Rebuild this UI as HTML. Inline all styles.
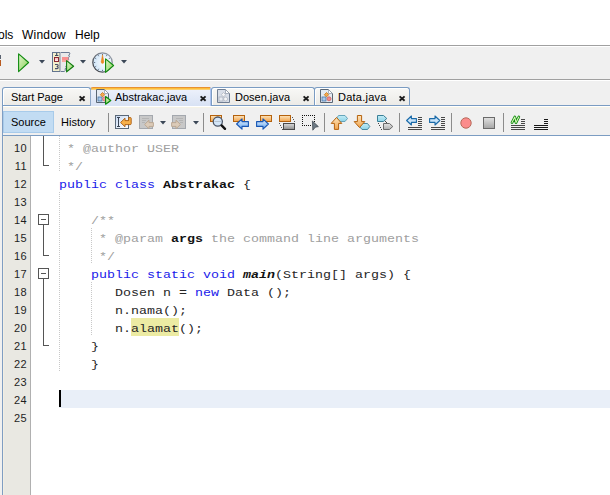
<!DOCTYPE html>
<html><head><meta charset="utf-8">
<style>
html,body{margin:0;padding:0;}
body{width:610px;height:495px;overflow:hidden;position:relative;background:#fff;font-family:"Liberation Sans",sans-serif;}
.abs{position:absolute;}
#menu{left:0;top:0;width:610px;height:45px;background:#fff;}
#menu span{position:absolute;top:28px;font-size:12px;line-height:14px;color:#000;white-space:nowrap;}
#tb{left:0;top:45px;width:610px;height:42px;background:#f0f0f0;}
#tabs{left:0;top:87px;width:610px;height:19px;background:#f0f0f0;}
.tab{position:absolute;top:0;height:18px;border:1px solid #7b9cc2;border-bottom:none;border-radius:3px 3px 0 0;box-sizing:border-box;background:linear-gradient(#f8f8f6,#ecebe7);box-shadow:inset 1px 1px 0 #fff;font-size:11px;line-height:14px;color:#000;white-space:nowrap;}
.tab .t{position:absolute;top:2px;}
.tab .x{position:absolute;top:8px;width:7px;height:6px;}
#etb{left:0;top:106px;width:610px;height:30px;background:#f0f0f0;}
#ed{left:0;top:136px;width:610px;height:359px;background:#fff;}
#gut{left:3px;top:0;width:27px;height:359px;background:#e9e8e2;box-shadow:inset 1px 0 0 #f2eee3;}
.ln{position:absolute;left:0;width:24px;text-align:right;font-size:11px;line-height:18px;color:#1e1e1e;height:18px;padding-top:1px;letter-spacing:0.4px;}
.cl{position:absolute;left:59px;height:18px;font-family:"Liberation Mono",monospace;font-size:13.333px;line-height:18px;white-space:pre;color:#262626;}
.c{color:#a0a0a0;} .k{color:#1a1aea;} .b{font-weight:bold;color:#121212;} .bi{font-weight:bold;font-style:italic;color:#121212;}
.cl{transform-origin:0 12.55px;transform:translateY(1.5px) scaleY(0.86);}
.dg{position:absolute;width:1px;background:repeating-linear-gradient(to bottom,#c8c8c8 0,#c8c8c8 1px,#fff 1px,#fff 2px);}
</style></head><body>
<div id="menu" class="abs"><span style="left:-2px">ols</span><span style="left:22px;letter-spacing:0.2px">Window</span><span style="left:75px">Help</span></div>
<div id="tb" class="abs">
  <div class="abs" style="left:0;top:0;width:610px;height:1px;background:#a0a0a0"></div>
  <div class="abs" style="left:0;top:1px;width:610px;height:1px;background:#fff"></div>
  <div class="abs" style="left:0;top:34px;width:610px;height:1px;background:#a0a0a0"></div>
  <div class="abs" style="left:0;top:35px;width:610px;height:1px;background:#fff"></div>
</div>
<div id="tabs" class="abs">
  <div class="abs" style="left:2px;top:18px;width:608px;height:1px;background:#7b9cc2"></div>
  <div class="tab" style="left:2px;width:89px;"><span class="t" style="left:8px">Start Page</span></div>
  <div class="tab" style="left:90px;width:121px;background:linear-gradient(#fdbf3a,#fdbf3a) 0 0/100% 1px no-repeat,linear-gradient(#fcd070,#fcd070) 0 1px/100% 1px no-repeat,linear-gradient(#eef2fb,#d8e2f4);border:none;border-top:1px solid #e89030;border-left:1px solid #8fa8c8;border-right:1px solid #adc3ef;top:0;height:19px;border-radius:3px 0 0 0;box-shadow:none"><span class="t" style="left:24px;top:2px">Abstrakac.java</span></div>
  <div class="tab" style="left:211px;width:104px;"><span class="t" style="left:23px">Dosen.java</span></div>
  <div class="tab" style="left:314px;width:96px;"><span class="t" style="left:23px;letter-spacing:0.25px">Data.java</span></div>
</div>
<div id="etb" class="abs">
  <div class="abs" style="left:3px;top:0;width:607px;height:1px;background:#fff"></div>
  <div class="abs" style="left:3px;top:1px;width:607px;height:1px;background:#f5f3e6"></div>
  <div class="abs" style="left:2px;top:0;width:1px;height:30px;background:#7f9dc2"></div>
  <div class="abs" style="left:3px;top:5px;width:51px;height:22px;box-sizing:border-box;background:#c2dcf3;border:1px solid #a8cbea"></div>
  <span class="abs" style="left:11px;top:9px;font-size:11px;line-height:14px">Source</span>
  <span class="abs" style="left:61px;top:9px;font-size:11px;line-height:14px">History</span>
  <div class="abs" style="left:2px;top:29px;width:608px;height:1px;background:#7b9cc2"></div>
</div>
<div id="ed" class="abs">
  <div class="abs" style="left:0;top:0;width:2px;height:359px;background:#f0f0f0"></div>
  <div class="abs" style="left:2px;top:0;width:1px;height:359px;background:#7f9dc2"></div>
  <div id="gut" class="abs">
    <div class="ln" style="top:2px">10</div>
    <div class="ln" style="top:20px">11</div>
    <div class="ln" style="top:38px">12</div>
    <div class="ln" style="top:56px">13</div>
    <div class="ln" style="top:74px">14</div>
    <div class="ln" style="top:92px">15</div>
    <div class="ln" style="top:110px">16</div>
    <div class="ln" style="top:128px">17</div>
    <div class="ln" style="top:146px">18</div>
    <div class="ln" style="top:164px">19</div>
    <div class="ln" style="top:182px">20</div>
    <div class="ln" style="top:200px">21</div>
    <div class="ln" style="top:218px">22</div>
    <div class="ln" style="top:236px">23</div>
    <div class="ln" style="top:254px">24</div>
    <div class="ln" style="top:272px">25</div>
  </div>
  <div class="abs" style="left:131px;top:182px;width:48px;height:18px;background:#ecebA3"></div>
  <div class="dg" style="left:59px;top:0;height:36px"></div>
  <div class="dg" style="left:59px;top:56px;height:180px"></div>
  <div class="dg" style="left:91px;top:92px;height:36px"></div>
  <div class="dg" style="left:91px;top:146px;height:54px"></div>
  <!--CODE-->
  <div class="cl" style="top:2px"><span class="c"> * @author USER</span></div>
  <div class="cl" style="top:20px"><span class="c"> */</span></div>
  <div class="cl" style="top:38px"><span class="k">public</span> <span class="k">class</span> <span class="b">Abstrakac</span> {</div>
  <div class="cl" style="top:74px"><span class="c">    /**</span></div>
  <div class="cl" style="top:92px"><span class="c">     * @param <span class="b">args</span> the command line arguments</span></div>
  <div class="cl" style="top:110px"><span class="c">     */</span></div>
  <div class="cl" style="top:128px">    <span class="k">public</span> <span class="k">static</span> <span class="k">void</span> <span class="bi">main</span>(String[] args) {</div>
  <div class="cl" style="top:146px">       Dosen n = <span class="k">new</span> Data ();</div>
  <div class="cl" style="top:164px">       n.nama();</div>
  <div class="cl" style="top:182px">       n.alamat();</div>
  <div class="cl" style="top:200px">    }</div>
  <div class="cl" style="top:218px">    }</div>
  <!--/CODE-->
  <div class="abs" style="left:30px;top:0;width:1px;height:359px;background:#b0b0b0"></div>
  <div class="abs" style="left:59px;top:254px;width:551px;height:18px;background:#e9eff8"></div>
  <div class="abs" style="left:59px;top:254px;width:2px;height:17px;background:#000"></div>
</div>
<svg class="abs" style="left:0;top:0" width="610" height="495" viewBox="0 0 610 495">
<defs>
<linearGradient id="gG" x1="0" y1="0" x2="1" y2="1"><stop offset="0" stop-color="#e4f6d0"/><stop offset="1" stop-color="#86d054"/></linearGradient>
<linearGradient id="gO" x1="0" y1="0" x2="0" y2="1"><stop offset="0" stop-color="#fde4bc"/><stop offset="1" stop-color="#f2a44c"/></linearGradient>
<linearGradient id="gB" x1="0" y1="0" x2="0" y2="1"><stop offset="0" stop-color="#eef6ff"/><stop offset="1" stop-color="#62a6f0"/></linearGradient>
<linearGradient id="gGr" x1="0" y1="0" x2="0" y2="1"><stop offset="0" stop-color="#dcdcdc"/><stop offset="1" stop-color="#8e8e8e"/></linearGradient>
<linearGradient id="gC" x1="0" y1="0" x2="0" y2="1"><stop offset="0" stop-color="#c4ecf6"/><stop offset="1" stop-color="#8cd4e8"/></linearGradient>
<linearGradient id="gBox" x1="0" y1="0" x2="1" y2="1"><stop offset="0" stop-color="#c8daf4"/><stop offset="1" stop-color="#ffffff"/></linearGradient>
<radialGradient id="gClk" cx="0.65" cy="0.5" r="0.75"><stop offset="0" stop-color="#ffffff"/><stop offset="1" stop-color="#c6e0f6"/></radialGradient>
<linearGradient id="gGr2" x1="0" y1="0" x2="0" y2="1"><stop offset="0" stop-color="#e2e2e2"/><stop offset="1" stop-color="#a4a4a4"/></linearGradient>
<linearGradient id="gGr3" x1="0" y1="0" x2="0" y2="1"><stop offset="0" stop-color="#e4e4e4"/><stop offset="1" stop-color="#b0b0b0"/></linearGradient>
<linearGradient id="gRing" x1="1" y1="0" x2="0" y2="1"><stop offset="0" stop-color="#a4acb8"/><stop offset="1" stop-color="#34363c"/></linearGradient>
</defs>
<!--MAINTB-->
<g id="maintb">
<rect x="0" y="55" width="1" height="4" fill="#5a6270"/><rect x="0" y="60" width="1" height="6" fill="#b85a20"/>
<path d="M18.6 53.8 L28.6 62.5 L18.6 71.6 Z" fill="url(#gG)" stroke="#0f8a0f" stroke-width="1.1" stroke-linejoin="round"/>
<path d="M39 60 H45 L42 63.5 Z" fill="#3c4858"/>
<!-- debug icon -->
<rect x="52.5" y="52.5" width="7.5" height="19" fill="#f3efcc" stroke="#62748e"/>
<rect x="60" y="53" width="1" height="18" fill="#b4bac4"/>
<path d="M61 52.5 H69.4 L70 54 L68.6 55 L69.6 56.6 L68 57.6 L68.8 59.4 L67.4 60.4 L68 62 L66.6 63.2 L67.2 65 L65.8 66 L66.4 67.8 L65 68.8 L65.4 70.4 L64.2 71.5 H61" fill="#e9e9ea" stroke="#6a7a94" stroke-width="1" stroke-linejoin="round"/>
<rect x="62" y="57" width="6.4" height="5" fill="#f89090"/>
<rect x="62" y="60" width="5.6" height="2" fill="#f8a8a0"/>
<path d="M55 55.5 H58.4 M56.7 53 V55.5" stroke="#3e4a5e" stroke-width="1.1" fill="none"/>
<rect x="54.5" y="57.5" width="4" height="4" fill="#f9c4c4" stroke="#8b2a32"/>
<rect x="55" y="59.6" width="3" height="1.4" fill="#fdeaea"/>
<path d="M55 64.5 H57.2 Q58.2 64.5 58.2 65.5 Q58.2 66.5 56.6 66.5 Q58.2 66.5 58.2 67.6 Q58.2 68.6 57.2 68.6 H55" fill="none" stroke="#47506a" stroke-width="1.1"/>
<path d="M66.6 60.6 L73.6 66.3 L66.6 71.8 Z" fill="url(#gG)" stroke="#0f7a0f" stroke-width="1.1" stroke-linejoin="round"/>
<path d="M80 60 H86 L83 63.5 Z" fill="#3c4858"/>
<!-- clock -->
<circle cx="102.5" cy="62.5" r="9.7" fill="url(#gClk)" stroke="url(#gRing)" stroke-width="1.3"/>
<g stroke="#64748c" stroke-width="1"><path d="M102.5 54v1.2M102.5 69.800v1.200M94 62.5h1.200M98.2 55.2l.6 1M106.8 55.2l-.6 1M95.2 58.2l1 .6M95.2 66.800l1 -.6M98.2 69.800l.6 -1M109.8 58.2l-1 .6M109.8 66.800l-1 -.6"/></g>
<path d="M102.5 54.8 L103.8 61.6 Q103.8 63.6 102.5 63.6 Q101.2 63.6 101.2 61.6 Z" fill="#ee8a22" stroke="#e07c14" stroke-width="0.5"/>
<path d="M105.6 58.8 L113.6 65.5 L105.6 72.4 Z" fill="url(#gG)" stroke="#0f8a0f" stroke-width="1.1" stroke-linejoin="round"/>
<path d="M121 60 H127 L124 63.5 Z" fill="#3c4858"/>
</g>
<!--/MAINTB-->
<!--TABS-->
<g id="tabsicons">
<g fill="none" stroke="#1c1c1c" stroke-width="1.9"><path d="M79.6 96.4l5 4.4m0-4.4l-5 4.4"/><path d="M200.6 96.4l5 4.4m0-4.4l-5 4.4"/><path d="M303.6 96.4l5 4.4m0-4.4l-5 4.4"/><path d="M399.6 96.4l5 4.4m0-4.4l-5 4.4"/></g>
<!-- Abstrakac icon -->
<path d="M96.5 89.5 H104.5 L108.5 93.5 V102.5 H96.5 Z" fill="#e4eaf2" stroke="#5a6674"/>
<path d="M104.5 89.5 V93.5 H108.5 Z" fill="#fff" stroke="#8a94a4" stroke-width="0.7"/>
<rect x="98" y="97" width="4" height="4" fill="#a8c8ec" stroke="#4a78a8" stroke-width="0.8"/>
<path d="M102.5 92.5 l2.2 2.2 l-2.2 2.2 l-2.2 -2.2 Z" fill="#f4a850" stroke="#c87818" stroke-width="0.8"/>
<circle cx="104.6" cy="99" r="2" fill="#f4a0a0" stroke="#d06868" stroke-width="0.8"/>
<path d="M105.6 96.6 L110.8 100.4 L105.6 104.2 Z" fill="url(#gG)" stroke="#0c8a0c" stroke-width="1.2" stroke-linejoin="round"/>
<!-- Dosen icon (dimmed) -->
<path d="M217.5 89.5 H225.5 L229.5 93.5 V102.5 H217.5 Z" fill="#d8dee8" stroke="#707e92"/>
<path d="M225.5 89.5 V93.5 H229.5 Z" fill="#fff" stroke="#8a94a4" stroke-width="0.7"/>
<rect x="219" y="97" width="4" height="4" fill="#e8ecf2" stroke="#a8b0bc" stroke-width="0.8"/>
<path d="M223.5 92.5 l2.2 2.2 l-2.2 2.2 l-2.2 -2.2 Z" fill="#f4f4f6" stroke="#b0b6c0" stroke-width="0.8"/>
<circle cx="225.6" cy="99" r="2" fill="#f6f6f8" stroke="#b0b6c0" stroke-width="0.8"/>
<!-- Data icon -->
<path d="M320.5 89.5 H328.5 L332.5 93.5 V102.5 H320.5 Z" fill="#e4eaf2" stroke="#5a6674"/>
<path d="M328.5 89.5 V93.5 H332.5 Z" fill="#fff" stroke="#8a94a4" stroke-width="0.7"/>
<rect x="322" y="97" width="4" height="4" fill="#a8c8ec" stroke="#4a78a8" stroke-width="0.8"/>
<path d="M326.5 92.5 l2.2 2.2 l-2.2 2.2 l-2.2 -2.2 Z" fill="#f4a850" stroke="#c87818" stroke-width="0.8"/>
<circle cx="329" cy="98.8" r="2" fill="#f08c8c" stroke="#cc6060" stroke-width="0.8"/>
</g>
<!--/TABS-->
<!--ETB-->
<g id="etbicons">
<rect x="108" y="113" width="1" height="19" fill="#8c8c8c"/><rect x="203" y="113" width="1" height="19" fill="#8c8c8c"/><rect x="324" y="113" width="1" height="19" fill="#8c8c8c"/><rect x="399" y="113" width="1" height="19" fill="#8c8c8c"/><rect x="451" y="113" width="1" height="19" fill="#8c8c8c"/><rect x="503" y="113" width="1" height="19" fill="#8c8c8c"/>
<rect x="115.5" y="115.5" width="13" height="13" fill="url(#gBox)" stroke="#5a6878"/>
<path d="M117 117.5h3M117 126.5h3M118.5 117.5v9" stroke="#3a4454" stroke-width="1" fill="none"/>
<path d="M120.6 122.5 L125 118.2 V120.6 H128.6 V117.6 H130.6 Q131.2 117.6 131.2 118.4 V123.6 Q131.2 124.6 130.2 124.6 H125 V126.8 Z" fill="#f7b04a" stroke="#a8580c" stroke-width="0.9" stroke-linejoin="round"/>
<rect x="139.5" y="115.5" width="13" height="13" fill="#c8c8c8" stroke="#a4a8ae"/>
<path d="M142 118.5h7M142 120.5h4M142 122.5h3" stroke="#b4b4b4" stroke-width="1"/>
<path d="M144.6 124.5 L149 120.2 V122.6 H153.4 V126.4 H149 V128.8 Z" fill="#dccbb8" stroke="#b8a48e" stroke-width="0.9" stroke-linejoin="round"/>
<path d="M160 121 H166 L163 124.5 Z" fill="#3c4858"/>
<rect x="172.5" y="115.5" width="13" height="13" fill="#c8c8c8" stroke="#a4a8ae"/>
<path d="M176 118.5h7M179 120.5h4M180 122.5h3" stroke="#b4b4b4" stroke-width="1"/>
<path d="M180.4 124.5 L176 120.2 V122.6 H171.6 V126.4 H176 V128.8 Z" fill="#dccbb8" stroke="#b8a48e" stroke-width="0.9" stroke-linejoin="round"/>
<path d="M193 121 H199 L196 124.5 Z" fill="#3c4858"/>
<rect x="210.5" y="115.5" width="11" height="6" fill="url(#gO)" stroke="#b4620e"/>
<circle cx="217.8" cy="121.6" r="4.6" fill="#d4e6f8" stroke="#4c5668" stroke-width="1.3"/>
<path d="M214.5 121.5h6.5" stroke="#b8c4d0" stroke-width="1"/>
<path d="M221.6 125.4 L225 128.8" stroke="#141414" stroke-width="2.4" stroke-linecap="round"/>
<rect x="233.5" y="115.5" width="11" height="6" fill="url(#gO)" stroke="#b4620e"/>
<path d="M236.6 124 L242 118.8 V121.6 H248.4 V126.4 H242 V129.2 Z" fill="url(#gB)" stroke="#1856b4" stroke-width="1.1" stroke-linejoin="round"/>
<rect x="260.5" y="115.5" width="11" height="6" fill="url(#gO)" stroke="#b4620e"/>
<path d="M268.4 124 L263 118.8 V121.6 H256.6 V126.4 H263 V129.2 Z" fill="url(#gB)" stroke="#1856b4" stroke-width="1.1" stroke-linejoin="round"/>
<rect x="279.5" y="115.5" width="11" height="6" fill="url(#gO)" stroke="#b4620e"/>
<rect x="283.5" y="123.5" width="11" height="6" fill="url(#gGr)" stroke="#4a4a4a"/>
<g fill="#555"><rect x="292" y="117" width="1" height="1"/><rect x="293" y="119" width="1" height="1"/><rect x="294" y="121" width="1" height="1"/><rect x="279" y="123" width="1" height="1"/><rect x="280" y="125" width="1" height="1"/><rect x="281" y="127" width="1" height="1"/><rect x="282" y="129" width="1" height="1"/></g>
<g fill="#111"><rect x="302" y="115" width="1" height="1"/><rect x="304" y="115" width="1" height="1"/><rect x="306" y="115" width="1" height="1"/><rect x="308" y="115" width="1" height="1"/><rect x="310" y="115" width="1" height="1"/><rect x="312" y="115" width="1" height="1"/><rect x="314" y="115" width="1" height="1"/><rect x="302" y="117" width="1" height="1"/><rect x="302" y="119" width="1" height="1"/><rect x="302" y="121" width="1" height="1"/><rect x="302" y="123" width="1" height="1"/><rect x="302" y="125" width="1" height="1"/><rect x="304" y="125" width="1" height="1"/><rect x="306" y="125" width="1" height="1"/><rect x="308" y="125" width="1" height="1"/><rect x="310" y="125" width="1" height="1"/><rect x="314" y="117" width="1" height="1"/><rect x="314" y="119" width="1" height="1"/><rect x="314" y="121" width="1" height="1"/></g>
<path d="M312.4 121 L318.4 126.6 L315.4 127.2 L312.8 130.2 Z" fill="#6e7a84" stroke="#38424c" stroke-width="0.7"/>
<path d="M338.5 115.5 H345 L347.5 118.5 L345 121.5 H338.5 L336.5 118.5 Z" fill="url(#gC)" stroke="#5a9cb4" stroke-width="0.9"/>
<path d="M336.5 117.5 L341.8 123.4 H338.6 V129.4 H334.4 V123.4 H331.2 Z" fill="url(#gO)" stroke="#b4620e" stroke-width="1" stroke-linejoin="round"/>
<path d="M362 123.5 H367.5 L369.8 126.5 L367.5 129.5 H362 L359.5 126.5 Z" fill="url(#gC)" stroke="#3a8098" stroke-width="0.9"/>
<path d="M357.4 115.5 H361.6 V121.6 H364.8 L359.5 127.5 L354.2 121.6 H357.4 Z" fill="url(#gO)" stroke="#b4620e" stroke-width="1" stroke-linejoin="round"/>
<path d="M377.5 115.5 H383.5 L386.8 118.5 L383.5 121.5 H377.5 Z" fill="url(#gC)" stroke="#3a8098" stroke-width="1"/>
<path d="M383.5 123.5 H389.5 L392.8 126.5 L389.5 129.5 H383.5 Z" fill="url(#gGr3)" stroke="#6a6a6a" stroke-width="1"/>
<g fill="#444"><rect x="378" y="123" width="1" height="1"/><rect x="379" y="125" width="1" height="1"/><rect x="380" y="127" width="1" height="1"/><rect x="381" y="129" width="1" height="1"/><rect x="385" y="121" width="1" height="1"/><rect x="386" y="122" width="1" height="1"/></g>
<path d="M406.6 120.5 L411.4 116 V118.6 H416.4 V122.4 H411.4 V125 Z" fill="#c8e4fa" stroke="#1a6aa8" stroke-width="1.1" stroke-linejoin="round"/>
<rect x="418" y="117" width="4" height="1" fill="#484848"/><rect x="418" y="119" width="4" height="1" fill="#484848"/><rect x="418" y="121" width="4" height="1" fill="#484848"/><rect x="418" y="123" width="4" height="1" fill="#484848"/><rect x="418" y="125" width="4" height="1" fill="#484848"/><rect x="408" y="127" width="14" height="1" fill="#484848"/><rect x="408" y="129" width="14" height="1" fill="#484848"/>
<path d="M439.8 120.5 L435 116 V118.6 H429.6 V122.4 H435 V125 Z" fill="#c8e4fa" stroke="#1a6aa8" stroke-width="1.1" stroke-linejoin="round"/>
<rect x="441" y="117" width="4" height="1" fill="#484848"/><rect x="441" y="119" width="4" height="1" fill="#484848"/><rect x="441" y="121" width="4" height="1" fill="#484848"/><rect x="441" y="123" width="4" height="1" fill="#484848"/><rect x="441" y="125" width="4" height="1" fill="#484848"/><rect x="431" y="127" width="14" height="1" fill="#484848"/><rect x="431" y="129" width="14" height="1" fill="#484848"/>
<circle cx="466" cy="123" r="5.2" fill="#fb8c8c" stroke="#b86a5a" stroke-width="1"/>
<rect x="483.5" y="117.5" width="11" height="11" fill="url(#gGr2)" stroke="#6a6a6a"/>
<rect x="521" y="119" width="4" height="1" fill="#484848"/><rect x="521" y="121" width="4" height="1" fill="#484848"/><rect x="521" y="123" width="4" height="1" fill="#484848"/><rect x="511" y="125" width="14" height="1" fill="#484848"/><rect x="511" y="127" width="14" height="1" fill="#484848"/><rect x="511" y="129" width="14" height="1" fill="#484848"/><path d="M512 122.6 L514.8 117 L516 122.6 L518.8 117" fill="none" stroke="#0f8a0f" stroke-width="2.7" stroke-linecap="round" stroke-linejoin="round"/>
<path d="M512 122.6 L514.8 117 L516 122.6 L518.8 117" fill="none" stroke="#d4f6b4" stroke-width="1.1" stroke-linecap="round" stroke-linejoin="round"/>
<rect x="544" y="119" width="4" height="1" fill="#181818"/><rect x="544" y="121" width="4" height="1" fill="#181818"/><rect x="544" y="123" width="4" height="1" fill="#181818"/><rect x="534" y="125" width="14" height="1" fill="#181818"/><rect x="534" y="127" width="14" height="1" fill="#181818"/><rect x="534" y="129" width="14" height="1" fill="#181818"/>
</g>
<!--/ETB-->
<!--FOLD-->
<g id="fold" fill="#555" shape-rendering="crispEdges">
<rect x="43" y="136" width="1" height="30"/><rect x="43" y="165" width="6" height="1"/>
<rect x="38.5" y="214.5" width="10" height="10" fill="#fff" stroke="#555"/><rect x="41" y="219" width="5" height="1"/>
<rect x="43" y="225" width="1" height="31"/><rect x="43" y="255" width="6" height="1"/>
<rect x="38.5" y="268.5" width="10" height="10" fill="#fff" stroke="#555"/><rect x="41" y="273" width="5" height="1"/>
<rect x="43" y="279" width="1" height="67"/><rect x="43" y="345" width="6" height="1"/>
</g>
<!--/FOLD-->
</svg>
</body></html>
